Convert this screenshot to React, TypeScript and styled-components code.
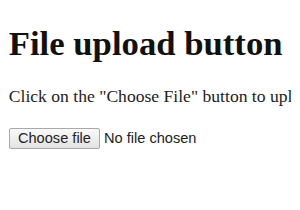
import React from "react";
import styled, { createGlobalStyle } from "styled-components";

const Global = createGlobalStyle`
  html { margin: 0; padding: 0; background: #fff; overflow: hidden; }
  body { margin: 0 8.8px; padding: 0; font-family: "Liberation Serif", "Times New Roman", serif; color: #000; }
`;

const Page = styled.div`
  width: 1000px;
`;

const Title = styled.h1`
  font-size: 34.7px;
  font-weight: bold;
  line-height: 39px;
  margin: 23.6px 0;
  white-space: nowrap;
  color: #111;
`;

const Text = styled.p`
  font-size: 17.6px;
  line-height: 20px;
  margin: 17.6px 0;
  white-space: nowrap;
  color: #222;
`;

const FileRow = styled.div`
  display: flex;
  align-items: center;
  gap: 4px;
  padding-top: 4px;
  font-family: "Liberation Sans", Arial, sans-serif;
  font-size: 14.6px;
  color: #222;
`;

const ChooseButton = styled.button`
  font-family: "Liberation Sans", Arial, sans-serif;
  font-size: 14.6px;
  color: #222;
  padding: 0;
  width: 91px;
  height: 21px;
  border: 1px solid #a9a9a9;
  border-radius: 2px;
  background: linear-gradient(#f9f9f9, #e3e3e3);
  margin: 0 0 0 0.2px;
  line-height: 19px;
`;

export default function App() {
  return (
    <>
      <Global />
      <Page>
        <Title>File upload button example</Title>
        <Text>Click on the "Choose File" button to upload a file:</Text>
        <FileRow>
          <ChooseButton type="button">Choose file</ChooseButton>
          <span>No file chosen</span>
        </FileRow>
      </Page>
    </>
  );
}
